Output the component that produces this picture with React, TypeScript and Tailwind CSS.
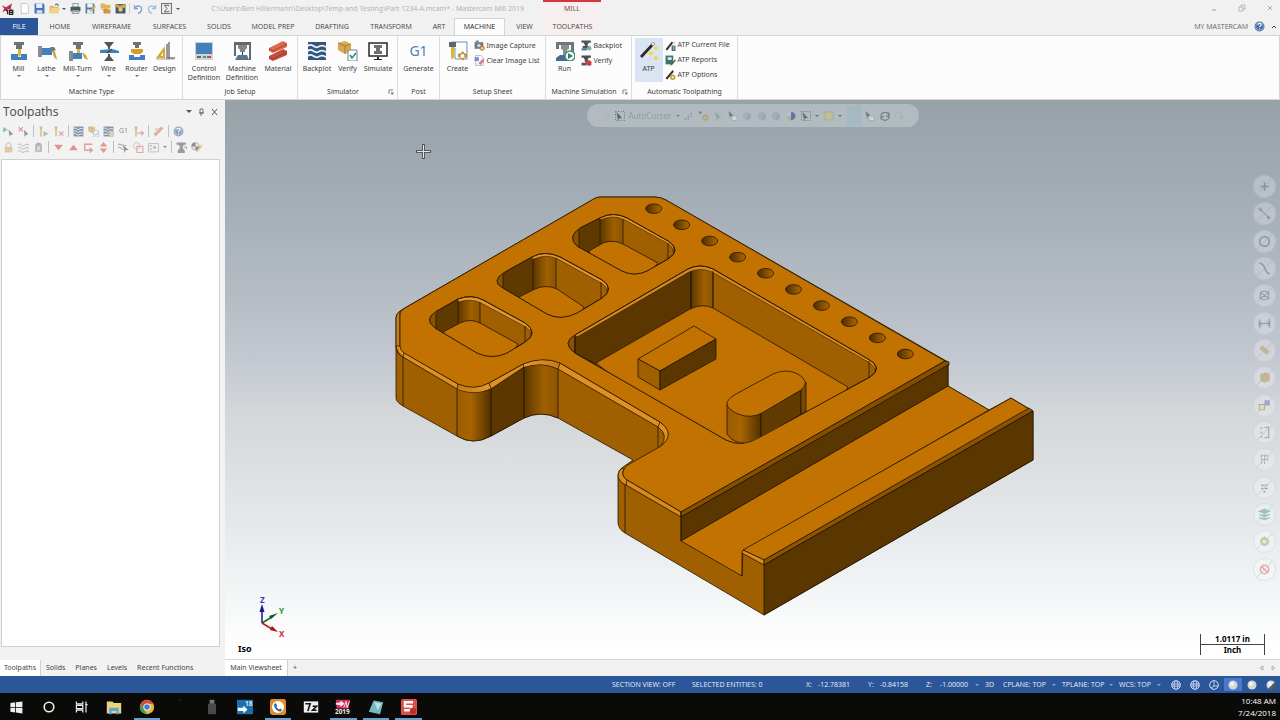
import type { ReactNode } from 'react';

const C = { steel: '#6f7377', blue: '#4180bd', navy: '#34557c', red: '#c94b43', green: '#3f9d7c' };

const glyphs: Record<string, ReactNode> = {
  mill: <><path d="M5 1h10v3h-2v4H7V4H5z" fill={C.steel} /><path d="M9 8h3v6l-2 2-1-2z" fill="#d8b830" /><path d="M2 13h7v3h3v-3h6v6H2z" fill={C.blue} /></>,
  lathe: <><path d="M1 5h4v11H1z" fill="#858b91" /><path d="M5 7h10v7H5z" fill={C.blue} /><path d="M15 6l2 2 2 6 1 5-3-3-3-9z" fill="#c8a644" /><path d="M13 6h4l2 3-4 1z" fill="#777" /></>,
  millturn: <><path d="M5 1h10v3h-2v4H8V4H5z" fill={C.steel} /><path d="M9 8h3v4H9z" fill="#d8b830" /><path d="M1 10h4v10H1z" fill="#858b91" /><path d="M5 12h9v6H5z" fill={C.blue} /><path d="M14 11l4 3 2 5-4-2z" fill="#c8a644" /></>,
  wire: <><path d="M5 1h10l-4 5v2H9V6zM5 20h10l-4-5v-2H9v2z" fill="#555" /><path d="M1 9l12-1 7 2v2H1z" fill={C.blue} /><path d="M13 8l-5 4" stroke="#222" /></>,
  router: <><path d="M6 1h8v3h-2v3H8V4H6z" fill={C.steel} /><path d="M4 8h12v3l-3 2H7l-3-2z" fill="#d79c25" /><path d="M2 14h5v2h6v-2h5v5H2z" fill={C.blue} /></>,
  design: <><path d="M1 17L10 5v12zm5-2h2v-4z" fill="#d6aa33" fillRule="evenodd" /><path d="M14 1v17M12 3v14h8" stroke="#777" strokeWidth="1.500" fill="none" /><path d="M1 18h18" stroke="#999" /></>,
  control: <><path d="M1 1h18v18H1z" fill="#cfd3d6" /><path d="M2 2h16v11H2z" fill={C.blue} /><path d="M3 15h4v2H3z" fill="#666" /><path d="M9 15h3v2H9z" fill={C.green} /><path d="M13 15h4v2h-4z" fill={C.red} /></>,
  machine: <><path d="M2 1h17v18h-2V4H4v11H2z" fill="#65696d" /><path d="M6 4h9v3l-2 2v2H8V9L6 7z" fill="#81868a" /><path d="M10 11h1v3h-1z" fill="#333" /><path d="M6 14h9l2 5H3z" fill="#55748d" /></>,
  material: <><path d="M1 7L15 0l4 2v4L5 12l-4-2z" fill="#dc694d" /><path d="M1 15l14-7 4 2v4L5 20l-4-2z" fill="#c44e3c" /><path d="M1 8l4 2 14-7M1 16l4 2 14-7" stroke="#92382d" strokeWidth=".8" fill="none" /></>,
  backplot: <><path d="M1 1h18v18H1z" fill={C.navy} /><path d="M1 5c4-4 6 3 10 1 3-2 5-2 8 0M1 10c4-4 6 3 10 1 3-2 5-2 8 0M1 15c4-4 6 3 10 1 3-2 5-2 8 0" stroke="#eef5fc" strokeWidth="1.800" fill="none" /></>,
  verify: <><path d="M0 2l7-2 6 3v7l-6 3-7-4z" fill="#d9a850" /><path d="M0 2l7 3 6-2M7 5v8" stroke="#a77a39" fill="none" /><path d="M10 9h9v11h-9z" fill="#fff" stroke="#718292" /><path d="M12 14l2 3 4-5" stroke="#268b72" strokeWidth="1.500" fill="none" /></>,
  simulate: <><path d="M1 2h18v13H1z" fill="#fff" stroke="#26292b" strokeWidth="1.500" /><path d="M6 4h8v3h-2v3h2v3H6v-3h2V7H6z" fill="#697178" /><path d="M9 16h2v2h3v1H6v-1h3z" fill="#222" /></>,
  create: <><path d="M4 1h15v17H7V7H4z" fill="#fcfcfc" stroke="#6793bd" /><path d="M1 1h7v5H1z" fill="#60666d" /><path d="M3 6h3v10l-2 3-1-3z" fill="#dcb52d" /><path d="M15 10l1 2 3 1v3l-3 1-1 3-2-3-3-1v-3l3-1z" fill="#c98d32" /><circle cx="14.500" cy="15" r="2" fill="#fff" /></>,
  run: <><path d="M1 1h18v10h-3V4H4v4H1z" fill="#72767a" /><path d="M6 4h8v4l-2 1v5H8V9L6 8z" fill="#8b8e91" /><path d="M1 17l4-3h8v6H1z" fill="#446d93" /><circle cx="15" cy="15" r="5" fill="#fff" stroke="#418d78" strokeWidth="1.500" /><path d="M13 12l5 3-5 3z" fill="#2b8068" /></>,
  wand: <><path d="M1 15L14 1l2 2L3 17z" fill="#292929" /><path d="M12 3l2-2 2 2-2 2z" fill="#eee" stroke="#777" strokeWidth=".5" /><path d="M17 4l1 2 2 1-2 1-1 2-1-2-2-1 2-1zM12 9l1 2 3 1-3 1-1 3-1-3-3-1 3-1zM17 14l1 2 2 1-2 1-1 2-1-2-2-1 2-1z" fill="#f1d54a" /></>,
  camera: <><path d="M1 4h16v12H1z" fill="#77797b" /><path d="M3 1h6v4H3z" fill="#6891bb" /><circle cx="9" cy="10" r="4" fill="#c8d8e8" stroke="#444" /><circle cx="15" cy="15" r="4" fill="#d6a642" stroke="#a97824" /><circle cx="15" cy="15" r="1.500" fill="#fff" /></>,
  clear: <><path d="M3 1h10l4 4v14H3z" fill="#f7f9fc" stroke="#7892b5" /><path d="M1 4h8v7H1z" fill="#7595bc" /><path d="M8 15L16 7l3 3-7 8z" fill="#d77a91" /></>,
  miniRun: <><path d="M1 1h17v4h-4l-2 4v2h4v4H3v-4h4V9L5 5H1z" fill="#4c555c" /><path d="M1 15h10v4H1z" fill="#4e7998" /><circle cx="15" cy="15" r="4" fill="#86aaa9" /></>,
  miniVerify: <><path d="M1 1h17v4h-4l-2 4v4H7V9L5 5H1z" fill="#474d51" /><path d="M1 14h9v5H1z" fill="#52585c" /><path d="M9 11l5-2 5 3v6l-5 2-5-3z" fill="#cb3e3c" /></>,
  atpFile: <><path d="M1 17L12 3l3 2L4 19z" fill="#2e2e2e" /><path d="M15 1l1 3 3 1-4 2z" fill="#d7b644" /><path d="M12 10h7v10h-7z" fill="#3a7385" /><path d="M15 11h1v7" stroke="#fff" fill="none" /></>,
  report: <><path d="M1 1h14v16H1z" fill="#39776e" /><path d="M5 4h7v5H5z" fill="#e0ece8" /><path d="M9 19L18 8l2 2-9 9z" fill="#4b514d" /></>,
  atpOptions: <><path d="M1 17L14 2l2 3L4 19z" fill="#2e2e2e" /><circle cx="14" cy="15" r="3.500" fill="#fff" stroke="#c0a52d" strokeWidth="3" /></>,
  doc: <path d="M4 1h9l4 4v14H4z" fill="#fff" stroke="#9aa3aa" />,
  save: <><path d="M1 1h16l2 2v16H1z" fill="#4279ba" /><path d="M4 1h11v8H4z" fill="#eaf1f8" /><path d="M5 13h10v6H5z" fill="#d4e1ed" /></>,
  folder: <><path d="M1 5h7l2 2h7v11H1z" fill="#dfba66" /><path d="M4 9h16l-4 10H1z" fill="#efd28f" /><path d="M11 4c4-4 6-1 6 2" stroke="#52718c" strokeWidth="2" fill="none" /></>,
  print: <><path d="M5 1h10v6H5zM4 13h12v6H4z" fill="#eef3f6" stroke="#555" /><path d="M1 7h18v8H1z" fill="#4d5961" /><path d="M4 13h12v4H4z" fill="#9cabae" /></>,
  saveAs: <><path d="M1 1h16v18H1z" fill="#4f7cac" /><path d="M4 1h10v7H4zM4 12h10v7H4z" fill="#eff3f6" /><path d="M8 15L18 4l2 3L10 17z" fill="#e2b33d" /></>,
  folders: <><path d="M1 1h7l2 2h9v7H1z" fill="#e0b653" /><path d="M7 10h6l2 2h4v7H7z" fill="#ce983b" /><path d="M3 12h4v6" stroke="#777" fill="none" /></>,
  package: <><path d="M1 2h18v17H1z" fill="#3d5a80" /><path d="M1 2l8 3 10-3v6L9 10 1 7z" fill="#d4aa3b" /><circle cx="10" cy="12" r="4" fill="#f2cb4c" /></>,
  undo: <path d="M3 2v7h7M4 8c5-7 15-4 13 4-1 4-4 6-7 7" stroke="#7ba3ca" strokeWidth="2.500" fill="none" />,
  redo: <path d="M17 2v7h-7M16 8C11 1 1 4 3 12c1 4 4 6 7 7" stroke="#a3bdd7" strokeWidth="2.500" fill="none" />,
  sigma: <><path d="M1 1h18v18H1z" stroke="#777" strokeWidth="2" fill="none" /><path d="M14 6V4H6l5 6-5 6h8v-2" stroke="#444" strokeWidth="1.500" fill="none" /></>,
  select: <><path d="M0 2l9 5-9 5z" fill="#49a777" /><path d="M10 7l9 8-5 1-2 4z" fill="#555" /></>,
  deselect: <><path d="M1 2l8 8M9 2l-8 8" stroke="#d85757" strokeWidth="2" /><path d="M11 7l8 8-4 1-3 4z" fill="#555" /></>,
  toolPlay: <><path d="M3 1h5v5H7v13H4V6H3z" fill="#b7a358" /><path d="M10 9l9 5-9 5z" fill="#63ab72" /></>,
  toolX: <><path d="M3 1h5v5H7v13H4V6H3z" fill="#b7a358" /><path d="M11 10l8 8M19 10l-8 8" stroke="#d56c65" strokeWidth="2" /></>,
  toolMove: <><path d="M3 1h5v5H7v13H4V6H3z" fill="#b7a358" /><path d="M8 13h11m-4-4l4 4-4 4" stroke="#d87868" strokeWidth="2" fill="none" /></>,
  regen: <><path d="M1 1h18v18H1z" fill={C.navy} /><path d="M1 5c4-4 6 3 10 1 3-2 5-2 8 0M1 10c4-4 6 3 10 1 3-2 5-2 8 0M1 15h9" stroke="#eef5fc" strokeWidth="1.800" fill="none" /><circle cx="15" cy="15" r="4" fill="#d2c07c" /></>,
  cut: <><path d="M1 14L15 1l4 3L5 19z" fill="#d87575" /><path d="M3 4h8L6 14z" fill="#dfc665" /></>,
  help: <><circle cx="10" cy="10" r="9" fill="#426c9f" /><circle cx="10" cy="10" r="7" stroke="#c4d9ec" fill="none" /><path d="M7 7c1-4 7-3 6 0 0 2-3 2-3 4m0 2v2" stroke="#fff" strokeWidth="2" fill="none" /></>,
  lock: <><path d="M3 9h14v10H3z" fill="#d6ad6b" /><path d="M6 9V5c1-5 8-5 8 0v4" stroke="#aaa" strokeWidth="2" fill="none" /></>,
  waves: <path d="M0 5c5-5 7 5 12 1 4-3 5-2 8 0M0 11c5-5 7 5 12 1 4-3 5-2 8 0M0 17c5-5 7 5 12 1 4-3 5-2 8 0" stroke="#71869a" strokeWidth="1.500" fill="none" />,
  ghost: <><path d="M4 19V7c0-8 12-8 12 0v12l-3-2-3 2-3-2z" fill="#85898d" /><path d="M7 7h6v9H7z" fill="#c5c5c5" /></>,
  down: <path d="M2 5h16l-8 10z" fill="#d65050" />,
  up: <path d="M2 15h16L10 5z" fill="#d65050" />,
  loop: <path d="M17 4H3v11h13m-4-4l5 4-5 4" stroke="#d66464" strokeWidth="2.500" fill="none" />,
  updown: <path d="M3 8h14l-7-8zM3 12h14l-7 8z" fill="#d65c55" />,
  cursorWave: <><path d="M0 5c6-5 7 5 15 1M0 11c5-5 5 4 10 2" stroke="#71869a" strokeWidth="2" fill="none" /><path d="M9 6l10 8-5 1-2 5z" fill="#555" /></>,
  overlap: <><circle cx="7" cy="7" r="6" stroke="#d78383" fill="none" strokeWidth="1.500" /><path d="M7 8h11v11H7z" stroke="#d77777" fill="none" strokeWidth="2" /></>,
  list: <><path d="M1 3h18v15H1z" stroke="#888" fill="none" strokeWidth="1.500" /><path d="M4 6h3v2H4zm0 6h3v2H4z" fill="#777" /><circle cx="12" cy="10" r="3" fill="#ad9f61" /></>,
  sim: <><path d="M1 1h17v4h-4l-2 4v2l4 5v4H3v-4l4-5V9L5 5H1z" fill="#5a646b" /><path d="M14 9h5v4" stroke="#777" strokeWidth="2" fill="none" /></>,
  probe: <><circle cx="8" cy="8" r="7" fill="#ddd" stroke="#555" /><path d="M8 1v7H1c0-4 3-7 7-7zm0 14V8h7c0 4-3 7-7 7z" fill="#444" /><path d="M9 17L19 4l1 4-8 10z" fill="#d7a44e" /></>,
  arrow: <path d="M4 1l13 12-7 1-3 6z" fill="#66727e" />,
  arrowBox: <><path d="M1 1h18v18H1z" stroke="#56616b" strokeDasharray="2 3" strokeWidth="2" fill="none" /><path d="M3 2l11 12-6 1-2 4z" fill="#45515c" /></>,
  points: <path d="M1 16h3m3-5h3m3-6h3M7 16h3m3-5h3" stroke="#72808c" strokeWidth="3" />,
  gear: <><path d="M2 0v7M0 3h6" stroke="#5a6670" strokeWidth="2" /><circle cx="13" cy="13" r="4.500" stroke="#be985e" strokeWidth="3.500" fill="none" /></>,
  cube: <><path d="M2 5l8-4 8 4v10l-8 4-8-4z" fill="#8493a7" /><path d="M10 9l8-4v10l-8 4z" fill="#697d99" /></>,
  shield: <><circle cx="10" cy="10" r="9" fill="#b5c4d4" /><path d="M10 1v18c12-2 12-16 0-18z" fill="#3c5c89" /><path d="M1 10c0 5 3 9 9 9v-9z" fill="#c1a66b" /></>,
  area: <path d="M2 2h16v16H2z" fill="#c9c183" stroke="#8b9072" strokeDasharray="2 2" strokeWidth="2" />,
  refresh: <path d="M2 10c1-10 15-10 16 0m0-7v7h-6M18 11c-1 10-15 10-16 0m0 6v-6h6" stroke="#5b6975" strokeWidth="2.500" fill="none" />,
  curve: <path d="M1 12C5-1 16 2 16 9v8l-6-6" stroke="#7b8994" strokeWidth="2" fill="none" />,
  fence: <><path d="M1 0l10 9-5 1-2 5z" fill="#53606a" /><path d="M8 10h10v9H8z" fill="#dce2e5" stroke="#7b8790" /></>,
};

function Icon({ name, className = 'h-5 w-5' }: { name: string; className?: string }) {
  return <svg viewBox="0 0 20 20" className={`shrink-0 ${className}`} aria-hidden="true">{glyphs[name]}</svg>;
}

function Caret() {
  return <svg viewBox="0 0 4 2" className="h-[2px] w-[4px] shrink-0" aria-hidden="true"><path d="M0 0h4L2 2z" fill="currentColor" /></svg>;
}

const menuTabs = [
  { label: 'HOME', w: 'w-[44px]' },
  { label: 'WIREFRAME', w: 'w-[59px]' },
  { label: 'SURFACES', w: 'w-[57px]' },
  { label: 'SOLIDS', w: 'w-[42px]' },
  { label: 'MODEL PREP', w: 'w-[66px]' },
  { label: 'DRAFTING', w: 'w-[52px]' },
  { label: 'TRANSFORM', w: 'w-[66px]' },
  { label: 'ART', w: 'w-[30px]' },
  { label: 'MACHINE', w: 'w-[51px]' },
  { label: 'VIEW', w: 'w-[39px]' },
  { label: 'TOOLPATHS', w: 'w-[57px]' },
];

function TitleBar() {
  const quick = ['doc', 'save', 'folder', 'print', 'saveAs', 'folders', 'package'];
  return (
    <header className="flex h-[18px] shrink-0 bg-[#f1f1f1]">
      <div className="flex w-[543px] shrink-0 items-center pb-[1px]">
        <svg viewBox="0 0 20 20" className="ml-[1px] mr-[5px] h-[13px] w-[13px] shrink-0" aria-hidden="true">
          <path d="M1 5l7 3 9-6-2 8 3 2-8-1-8 5 3-6z" fill="#c9284c" />
          <path d="M7 13h3v6m3-6h5v6h-5zm0 3h5" stroke="#222" strokeWidth="2" fill="none" />
        </svg>
        <div className="flex shrink-0 items-center gap-[4px] text-gray-600">
          {quick.map((q) => (
            <button key={q} aria-label={q} className="flex items-center gap-[2px]">
              <Icon name={q} className="h-[11px] w-[11px]" />
              {q === 'folder' && <Caret />}
            </button>
          ))}
        </div>
        <div className="ml-[3px] flex shrink-0 items-center gap-[4px] border-l border-gray-300 pl-[3px] text-gray-600">
          <button aria-label="undo"><Icon name="undo" className="h-[10px] w-[10px]" /></button>
          <button aria-label="redo"><Icon name="redo" className="h-[10px] w-[10px]" /></button>
          <button aria-label="analyze"><Icon name="sigma" className="h-[11px] w-[11px]" /></button>
          <button aria-label="customize"><Caret /></button>
        </div>
        <span className="ml-auto mr-[19px] whitespace-nowrap text-[#b4b4b4]">C:\Users\Ben Hillermann\Desktop\Temp and Testing\Part 1234-A.mcam* - Mastercam Mill 2019</span>
      </div>
      <div className="w-[58px] shrink-0 border-t-2 border-[#d2373c] bg-[#f7efef] pt-[2px] text-center text-[#8c4a47]">MILL</div>
      <div className="ml-auto flex w-[70px] items-center justify-between pb-[2px] pr-[6px] text-gray-400">
        <button aria-label="Minimize"><svg viewBox="0 0 8 8" className="h-2 w-2"><path d="M2 6h4" stroke="currentColor" /></svg></button>
        <button aria-label="Restore"><svg viewBox="0 0 8 8" className="h-2 w-2"><path d="M1 3h4v4H1zM3 3V1h4v4H5" stroke="currentColor" strokeWidth=".7" fill="none" /></svg></button>
        <button aria-label="Close"><svg viewBox="0 0 8 8" className="h-2 w-2"><path d="M2 2l4 4M6 2L2 6" stroke="currentColor" strokeWidth=".8" /></svg></button>
      </div>
    </header>
  );
}

function MenuTabs() {
  return (
    <nav className="flex h-[17px] shrink-0 bg-[#f1f1f1] font-['Open_Sans',sans-serif] text-[#444]">
      <button className="w-[38px] shrink-0 bg-[#2b579a] text-white">FILE</button>
      {menuTabs.map((t) => (
        <button
          key={t.label}
          className={`${t.w} shrink-0 whitespace-nowrap ${t.label === 'MACHINE' ? 'border border-b-0 border-[#d4d4d4] bg-[#fcfcfc] text-[#222]' : ''} ${t.label === 'TOOLPATHS' ? 'bg-[#f7efef]' : ''}`}
        >
          {t.label}
        </button>
      ))}
      <div className="ml-auto flex items-center gap-[6px] pr-[3px]">
        <button className="text-[#666]">MY MASTERCAM</button>
        <button aria-label="Help"><Icon name="help" className="h-[11px] w-[11px]" /></button>
        <button aria-label="Collapse ribbon"><svg viewBox="0 0 6 6" className="h-[6px] w-[6px]"><path d="M1 4l2-2 2 2" stroke="#444" fill="none" /></svg></button>
      </div>
    </nav>
  );
}

function Group({ title, w, launcher, children }: { title: string; w: string; launcher?: boolean; children: ReactNode }) {
  return (
    <section className={`${w} flex shrink-0 flex-col border-r border-[#dcdcdc]`}>
      <div className="mt-[2px] flex h-[44px] justify-center">{children}</div>
      <div className="mt-[5px] flex items-center">
        <h2 className="flex-1 whitespace-nowrap text-center">{title}</h2>
        {launcher && (
          <button aria-label={`${title} options`} className="mr-[3px]">
            <svg viewBox="0 0 6 6" className="h-[6px] w-[6px]"><path d="M1 5V1h4M3 3l2 2V3M5 5H3" stroke="#666" strokeWidth=".8" fill="none" /></svg>
          </button>
        )}
      </div>
    </section>
  );
}

function BigButton({ icon, label, w, menu, active }: { icon: string; label: string; w: string; menu?: boolean; active?: boolean }) {
  return (
    <button className={`${w} flex shrink-0 flex-col items-center pt-[3px] ${active ? 'bg-[#dbe4f3]' : ''}`}>
      {icon === 'g1' ? <span className="h-5 text-[14px] leading-5 text-[#4f83b8]">G1</span> : <Icon name={icon} />}
      <span className="mt-[3px] block whitespace-pre-line text-center leading-[9px]">{label}</span>
      {menu && <span className="mt-[2px] text-gray-500"><Caret /></span>}
    </button>
  );
}

function SmallButton({ icon, label }: { icon: string; label: string }) {
  return (
    <button className="flex h-[15px] items-center gap-[2px] whitespace-nowrap">
      <Icon name={icon} className="h-[11px] w-[11px]" />
      {label}
    </button>
  );
}

function Ribbon() {
  return (
    <div className="flex h-[65px] shrink-0 border border-[#d4d4d4] bg-[#fcfcfc] text-[#3c3c3c]">
      <Group title="Machine Type" w="w-[182px]">
        <BigButton icon="mill" label="Mill" w="w-[28px]" menu />
        <BigButton icon="lathe" label="Lathe" w="w-[28px]" menu />
        <BigButton icon="millturn" label="Mill-Turn" w="w-[34px]" menu />
        <BigButton icon="wire" label="Wire" w="w-[28px]" menu />
        <BigButton icon="router" label="Router" w="w-[28px]" menu />
        <BigButton icon="design" label="Design" w="w-[28px]" />
      </Group>
      <Group title="Job Setup" w="w-[115px]">
        <BigButton icon="control" label={'Control\nDefinition'} w="w-[38px]" />
        <BigButton icon="machine" label={'Machine\nDefinition'} w="w-[38px]" />
        <BigButton icon="material" label="Material" w="w-[34px]" />
      </Group>
      <Group title="Simulator" w="w-[100px]" launcher>
        <BigButton icon="backplot" label="Backplot" w="w-[32px]" />
        <BigButton icon="verify" label="Verify" w="w-[29px]" />
        <BigButton icon="simulate" label="Simulate" w="w-[32px]" />
      </Group>
      <Group title="Post" w="w-[42px]">
        <BigButton icon="g1" label="Generate" w="w-[38px]" />
      </Group>
      <Group title="Setup Sheet" w="w-[106px]">
        <BigButton icon="create" label="Create" w="w-[32px]" />
        <div className="flex w-[70px] flex-col items-start">
          <SmallButton icon="camera" label="Image Capture" />
          <SmallButton icon="clear" label="Clear Image List" />
        </div>
      </Group>
      <Group title="Machine Simulation" w="w-[86px]" launcher>
        <BigButton icon="run" label="Run" w="w-[32px]" />
        <div className="flex w-[48px] flex-col items-start">
          <SmallButton icon="miniRun" label="Backplot" />
          <SmallButton icon="miniVerify" label="Verify" />
        </div>
      </Group>
      <Group title="Automatic Toolpathing" w="w-[106px]">
        <BigButton icon="wand" label="ATP" w="w-[28px]" active />
        <div className="ml-[2px] flex w-[70px] flex-col items-start">
          <SmallButton icon="atpFile" label="ATP Current File" />
          <SmallButton icon="report" label="ATP Reports" />
          <SmallButton icon="atpOptions" label="ATP Options" />
        </div>
      </Group>
    </div>
  );
}

const toolRows = [
  ['select', 'deselect', '|', 'toolPlay', 'toolX', '|', 'backplot', 'verify', 'regen', 'g1', 'toolMove', '|', 'cut', '|', 'help'],
  ['lock', 'waves', 'ghost', '|', 'down', 'up', 'loop', 'updown', '|', 'cursorWave', 'overlap', 'list', 'caret', '|', 'sim', 'probe'],
];

function ToolpathsPanel() {
  const tabs = ['Solids', 'Planes', 'Levels', 'Recent Functions'];
  return (
    <aside className="flex w-[225px] shrink-0 flex-col bg-[#f2f2f2] text-[#444]">
      <div className="flex h-[23px] items-center pl-[3px] pr-[7px]">
        <h1 className="font-['Open_Sans',sans-serif] text-[12px] leading-[16px]">Toolpaths</h1>
        <div className="ml-auto flex items-center gap-[5px] text-[#555]">
          <button aria-label="Panel menu"><svg viewBox="0 0 6 3" className="h-[3px] w-[6px]"><path d="M0 0h6L3 3z" fill="currentColor" /></svg></button>
          <button aria-label="Pin"><svg viewBox="0 0 8 8" className="h-2 w-2"><path d="M3 1h3v4H3zM2 5h5M4 5v3" stroke="currentColor" strokeWidth=".8" fill="none" /></svg></button>
          <button aria-label="Close panel"><svg viewBox="0 0 8 8" className="h-2 w-2"><path d="M2 1l5 6M7 1L2 7" stroke="currentColor" /></svg></button>
        </div>
      </div>
      <div className="flex flex-col pl-[3px]">
        {toolRows.map((row, i) => (
          <div key={i} className="flex h-4 items-center gap-[4px] opacity-60">
            {row.map((n, j) => {
              if (n === '|') return <span key={j} className="h-3 w-px bg-gray-400" />;
              if (n === 'caret') return <Caret key={j} />;
              return (
                <button key={j} aria-label={n} className="flex w-[11px] justify-center">
                  {n === 'g1' ? 'G1' : <Icon name={n} className="h-[11px] w-[11px]" />}
                </button>
              );
            })}
          </div>
        ))}
      </div>
      <div className="ml-[1px] mr-[5px] mt-[4px] flex-1 border border-[#cfcfcf] bg-white" />
      <div className="mt-[13px] flex h-[16px] items-center">
        <button className="h-full w-[41px] border-r border-[#d0d0d0] bg-white">Toolpaths</button>
        {tabs.map((t) => <button key={t} className="px-[5px]">{t}</button>)}
      </div>
    </aside>
  );
}

const line = '#251600';
const top = '#c27200';
const left = '#a05f00';
const dark = '#5a3600';

const pockets = [
  {
    rim: 'M580 228L600 218Q613 211 627 218L668 241Q682 250 668 259L647 271Q634 277 622 271L577 246Q567 237 580 228Z',
    light: 'M600 218Q613 211 627 218L668 241Q676 246 673 252Q673 246 667 243L625 220Q613 214 600 220Z',
    floor: 'M589 251L603 243Q613 239 623 244L658 263L640 285H600Z',
    x: [579, 600, 623, 668], y: 214,
    edges: 'M579 230V247M600 219V244M623 219V244M668 243V259',
  },
  {
    rim: 'M505 272L532 257Q545 250 560 257L602 280Q615 289 602 298L577 313Q561 321 547 314L503 288Q490 281 505 272Z',
    light: 'M532 257Q545 250 560 257L602 280Q610 285 607 291Q607 286 601 283L558 259Q545 253 532 260Z',
    floor: 'M519 297L535 289Q546 284 557 289L584 307L580 325H530Z',
    x: [503, 533, 556, 601], y: 253,
    edges: 'M503 275V288M533 258V290M556 258V289M601 282V298',
  },
  {
    rim: 'M437 311L458 299Q472 294 483 300L525 323Q539 333 525 342L507 353Q492 360 477 353L435 328Q423 319 437 311Z',
    light: 'M458 299Q472 294 483 300L525 323Q533 328 531 334Q531 330 524 326L481 303Q471 298 458 302Z',
    floor: 'M443 332L460 323Q470 318 480 323L518 344L505 365H465Z',
    x: [436, 458, 480, 525], y: 297,
    edges: 'M436 314V328M458 301V323M480 302V323M525 326V342',
  },
];

const bigRim = 'M575 335L688 269Q700 263 713 269L868 359Q884 368 870 377L760 437Q742 448 726 440L575 353Q561 343 575 335Z';

function PartDrawing() {
  const holes = Array.from({ length: 10 }, (_, i) => ({ x: 653.7 + i * 27.96, y: 208.7 + i * 16.15 }));
  return (
    <svg viewBox="225 100 1055 559" className="h-full w-full" role="img" aria-label="Machined part, isometric view">
      <defs>
        <linearGradient id="corner"><stop offset="0" stopColor="#5a3600" /><stop offset=".6" stopColor="#a06000" /><stop offset="1" stopColor="#8c5300" /></linearGradient>
        <linearGradient id="convex"><stop offset="0" stopColor="#9a5b00" /><stop offset=".4" stopColor="#a86400" /><stop offset="1" stopColor="#523100" /></linearGradient>
        <linearGradient id="hole"><stop offset="0" stopColor="#4b2c00" /><stop offset="1" stopColor="#b06800" /></linearGradient>
        <linearGradient id="rimLight"><stop offset="0" stopColor="#c47a10" /><stop offset=".5" stopColor="#f3a93f" /><stop offset="1" stopColor="#c47a10" /></linearGradient>
        {pockets.map((p, i) => <clipPath key={i} id={`pocket${i}`}><path d={p.rim} /></clipPath>)}
        <clipPath id="bigPocket"><path d={bigRim} /></clipPath>
      </defs>
      <g stroke={line} strokeWidth=".8" strokeLinejoin="round" fill="none">
        <path fill={left} d="M600 197H655Q660 197 666 200L948 362V386L989 410L1011 398L1033 411V460L764 615L625 533Q618 529 618 522V475Q618 470 623 467L633 460L558 418Q541 410 524 418L491 436Q473 446 457 436L403 406Q396 402 396 398V318Q396 313 403 309L592 200Q596 197 600 197Z" />
        <path fill="#5c3700" d="M491 388L524 367V418L491 436Z" />
        <path fill="url(#convex)" d="M457 389Q474 396 491 388V436Q473 446 457 436Z" />
        <path fill="url(#corner)" d="M524 367Q541 361 558 368V418Q541 410 524 418Z" />
        <path d="M403 357V406M658 426V447" />
        <path fill="#c87d18" d="M396 318Q396 313 400 311V349L403 357Q396 354 396 346Z" />
        <path fill="#e08f22" d="M400 346L405 353L458 384Q474 391 489 383L523 364Q543 356 560 363L660 422Q674 431 667 441L661 446Q669 435 658 427L558 369Q541 361 524 367L491 389Q474 396 457 389L403 357Q397 353 396 346Z" />
        <path stroke="none" fill="url(#rimLight)" d="M458 384Q474 391 489 383L491 388Q474 396 457 389ZM523 364Q543 356 560 363L558 368Q541 361 524 367Z" />
        <path fill={top} d="M600 197H655Q660 197 666 200L945 361L681 512L627 480Q620 475 624 469Q626 465 633 462L661 446Q676 434 660 422L560 363Q543 356 523 364L489 383Q474 391 458 384L404 353Q400 350 400 346V313Q401 310 405 308L592 200Q596 197 600 197Z" />
        <path d="M458 384L457 389M489 383L491 389M523 364L524 367M560 363L558 369M404 353L403 357M660 422L658 427" />

        {/* rounded corner beside the channel */}
        <path fill="#d98a1c" d="M622 468Q618 471 618 476Q619 482 626 485L681 517V512L627 480Q620 475 624 469Z" />
        <path d="M625 485V533M627 480L626 485" />

        <path fill="#845000" d="M681 512L945 361L949 362V365L681 517Z" />
        <path fill={dark} d="M681 517L948 365V386L681 541Z" />
        <path fill={top} d="M681 541L948 386L989 410L743 551L742 576Z" />
        <path fill={top} d="M743 550L1011 398L1029 409L764 560Z" />
        <path fill="#df8d22" d="M743 550L764 560V565L742 553Z" />
        <path fill="#8c5400" d="M764 560L1029 408L1033 411L764 565Z" />
        <path fill={dark} d="M764 565L1033 411V460L764 615Z" />
        <path d="M681 512V541M742 553V576" />

        {pockets.map((p, i) => (
          <g key={i}>
            <path d={p.rim} fill={left} />
            <g clipPath={`url(#pocket${i})`}>
              <rect x={p.x[0] - 10} y={p.y} width="10" height="50" fill="#8a5200" stroke="none" />
              <rect x={p.x[0]} y={p.y} width={p.x[1] - p.x[0]} height="50" fill="#5e3900" stroke="none" />
              <rect x={p.x[1]} y={p.y} width={p.x[2] - p.x[1]} height="50" fill="url(#corner)" stroke="none" />
              <path d={p.floor} fill={top} />
            </g>
            <path d={p.light} fill="#e3982f" strokeWidth=".5" />
            <path d={p.edges} />
            <path d={p.rim} />
          </g>
        ))}

        <path d={bigRim} fill={left} />
        <g clipPath="url(#bigPocket)">
          <path d="M560 350V330L575 335V356Z" fill="#8a5200" />
          <path d="M575 337L691 270V310L596 364L575 353Z" fill={dark} />
          <path d="M691 268Q702 264 713 270V310H691Z" fill="url(#corner)" />
          <path d="M596 363L690 309Q702 303 713 308L848 387L800 460H720Z" fill={top} />
        </g>
        <path d="M575 335L688 269Q700 263 713 269L868 359Q878 364 875 371Q875 366 868 362L712 272Q700 267 689 272L577 337Z" fill="#d78a22" strokeWidth=".5" />
        <path d="M575 338V353M691 271V309M713 271V308M869 361V377" />
        <path d={bigRim} />

        <path fill={top} d="M694 326L716 339L660 371L638 359Z" />
        <path fill={left} d="M638 359L660 371V390L638 377Z" />
        <path fill={dark} d="M660 371L716 339V359L660 390Z" />

        <g clipPath="url(#bigPocket)">
          <path fill="url(#convex)" d="M727 404V434Q734 444 745 443Q754 442 761 438V413Z" />
          <path fill="#623b00" d="M761 413L801 390V414L761 438Z" />
          <path fill="#7a4900" d="M801 390L806 382V411L801 414Z" />
        </g>
        <path fill={top} d="M727 404Q727 399 736 394L773 374Q786 368 798 374Q811 382 801 390L762 413Q751 419 738 414Q727 409 727 404Z" />

        {holes.map((h, i) => <ellipse key={i} cx={h.x} cy={h.y} rx="8" ry="4.800" fill="url(#hole)" />)}
      </g>
      <path d="M416 151.500h15M423.500 144v15" stroke="#444" strokeWidth="2.500" />
      <path d="M417 151.500h13M423.500 145v13" stroke="#e4e6e8" />
    </svg>
  );
}

const selectionTools = ['points', 'gear', 'arrow', 'fence', 'cube', 'cube', 'cube', 'shield', 'arrowBox', 'caret', 'area', 'caret', 'active', 'fence', 'refresh', 'curve'];
const dimmed = ['arrow', 'cube', 'curve'];

const maskShapes: ReactNode[] = [
  <path d="M10 6v8M6 10h8" stroke="#5f7196" strokeWidth="1.500" />,
  <path d="M6 6l8 8M4 6h4M6 4v4M12 14h4M14 12v4" stroke="#6f7790" />,
  <circle cx="10" cy="10" r="4.500" stroke="#687594" strokeWidth="1.500" fill="none" />,
  <path d="M5 5c7 0 4 10 10 10" stroke="#687594" strokeWidth="1.500" fill="none" />,
  <path d="M6 7q4-2 8 0v6q-4 2-8 0zM6 7l8 6M14 7l-8 6" stroke="#687594" fill="none" />,
  <path d="M5 6v8M15 6v8M5 10h10M7 8l-2 2 2 2M13 8l2 2-2 2" stroke="#687594" fill="none" />,
  <path d="M5 8l3-3 7 6-3 3z" fill="#b4a66b" />,
  <path d="M6 7l5-2 4 2v6l-5 2-4-2z" fill="#b69e67" />,
  <><path d="M10 5h5v5h-5z" fill="#7d80b4" /><path d="M5 9h5v5H5z" fill="#e0d6ae" stroke="#a08c58" /></>,
  <><path d="M6 5h2v2H6zM6 9h2v2H6zM6 13h2v2H6z" fill="#a3a46e" /><path d="M10 5h4v10h-4" stroke="#777" fill="none" /></>,
  <path d="M7 6v9M10 6v9M13 6v6M7 6h6M7 10h5" stroke="#777f86" strokeDasharray="2 1" fill="none" />,
  <path d="M7 8h2m1 0h1m1 0h1M7 11h2m1 0h3M9 14h2" stroke="#8a6673" strokeWidth="1.500" />,
  <path d="M10 5l5 2-5 2-5-2zM5 10l5 2 5-2M5 13l5 2 5-2" fill="#6da0ac" stroke="#6da0ac" />,
  <><circle cx="10" cy="10" r="3" stroke="#b9b06d" strokeWidth="2.500" fill="none" /><path d="M10 5v2M15 10h-2" stroke="#b9b06d" /></>,
  <><circle cx="10" cy="10" r="4" stroke="#d77d7d" strokeWidth="1.500" fill="none" /><path d="M7 7l6 6" stroke="#d77d7d" strokeWidth="1.500" /></>,
];

function Viewport() {
  return (
    <main className="flex min-w-0 flex-1 flex-col">
      <div className="relative min-h-0 flex-1 overflow-hidden bg-[linear-gradient(to_bottom,#96a2a8_0%,#a2acb5_16%,#b3bac2_33%,#c3c8d0_46%,#d3d7da_56%,#e3e7ea_74%,#f5f7f8_90%,#ffffff_98%)]">
        <PartDrawing />
        <div className="absolute left-1/2 top-[4px] flex h-[23px] w-[332px] -translate-x-1/2 items-center justify-between rounded-full bg-white/25 px-[14px] text-[#66727d]">
          <span className="flex items-center gap-[4px] opacity-80">
            <Icon name="lock" className="h-[10px] w-[10px] opacity-50 grayscale" />
            <Icon name="arrowBox" className="h-[10px] w-[10px]" />
            <button className="text-[8px] text-[#87939d]">AutoCursor</button>
            <Caret />
          </span>
          {selectionTools.map((n, i) => {
            if (n === 'caret') return <Caret key={i} />;
            if (n === 'active') return <button key={i} aria-label="Toggle selection" className="h-[21px] w-[14px] bg-[#93b4c4]/40" />;
            return (
              <button key={i} aria-label={n} className={dimmed.includes(n) ? 'opacity-30' : 'opacity-70'}>
                <Icon name={n} className="h-[10px] w-[10px]" />
              </button>
            );
          })}
        </div>
        <div className="absolute right-[4px] top-[75px] flex h-[406px] flex-col justify-between">
          {maskShapes.map((s, i) => (
            <button key={i} aria-label={`Quick mask ${i + 1}`} className="h-[23px] w-[23px] rounded-full border border-[#9aa3ad]/20 bg-white/25">
              <svg viewBox="0 0 20 20" className="h-full w-full opacity-60"><path d="M17 3L3 17" stroke="#8b95a2" strokeWidth=".5" />{s}</svg>
            </button>
          ))}
        </div>
        <div className="absolute bottom-[4px] left-[13px] text-[9px] font-bold leading-[12px] text-black">
          <svg viewBox="0 0 40 46" className="mb-[2px] ml-[14px] h-[46px] w-[40px]" aria-label="Axes">
            <g strokeWidth="1.500" fontSize="8" fontWeight="bold">
              <path d="M10 28V14" stroke="#17178a" /><path d="M7.500 17L10 9l2.500 8z" fill="#17178a" /><text x="8" y="8" fill="#3333cc">Z</text>
              <path d="M10 28l10-6" stroke="#176c22" /><path d="M17 21l9-3-7 6z" fill="#0f5a1c" /><text x="27" y="19" fill="#159a2b">Y</text>
              <path d="M10 28l10 6" stroke="#b01822" /><path d="M18 35l8 2-6-6z" fill="#a3131c" /><text x="27" y="42" fill="#d62330">X</text>
            </g>
          </svg>
          Iso
        </div>
        <div className="absolute bottom-[4px] right-[15px] flex w-[65px] flex-col border-x border-[#444] text-center text-[8px] font-bold leading-[10px] text-black">
          <span className="border-b border-[#444]">1.0117 in</span>
          <span>Inch</span>
        </div>
      </div>
      <div className="flex h-[17px] items-stretch border-t border-[#d6d6d6] bg-[#f1f1f1] text-[#444]">
        <button className="w-[63px] border-r border-[#d0d0d0] bg-white">Main Viewsheet</button>
        <button aria-label="New viewsheet" className="px-[5px]">+</button>
        <div className="ml-auto flex items-center gap-[7px] pr-[4px]">
          <button aria-label="Previous"><svg viewBox="0 0 5 6" className="h-[6px] w-[5px]"><path d="M4 1v4L1 3z" stroke="#888" strokeWidth=".6" fill="none" /></svg></button>
          <button aria-label="Next"><svg viewBox="0 0 5 6" className="h-[6px] w-[5px]"><path d="M1 1v4l3-2z" stroke="#888" strokeWidth=".6" fill="none" /></svg></button>
        </div>
      </div>
    </main>
  );
}

const statusItems = [
  { text: 'SECTION VIEW: OFF', w: 'w-[80px]' },
  { text: 'SELECTED ENTITIES: 0', w: 'w-[114px]' },
  { text: 'X:', w: 'w-[12px]' },
  { text: '-12.78381', w: 'w-[50px]' },
  { text: 'Y:', w: 'w-[12px]' },
  { text: '-0.84158', w: 'w-[46px]' },
  { text: 'Z:', w: 'w-[14px]' },
  { text: '-1.00000', w: 'w-[45px]', menu: true },
  { text: '3D', w: 'w-[18px]' },
  { text: 'CPLANE: TOP', w: 'w-[59px]', menu: true },
  { text: 'TPLANE: TOP', w: 'w-[57px]', menu: true },
  { text: 'WCS: TOP', w: 'w-[48px]', menu: true },
];

function StatusBar() {
  return (
    <div className="flex h-[17px] shrink-0 items-center justify-end bg-[#2b579a] font-['Open_Sans',sans-serif] text-[#e8eef8]">
      {statusItems.map((s) => (
        <div key={s.text} className={`${s.w} flex shrink-0 items-center justify-between whitespace-nowrap pr-[6px]`}>
          <span>{s.text}</span>
          {s.menu && <span className="opacity-50"><Caret /></span>}
        </div>
      ))}
      <div className="grid h-[13px] w-[113px] shrink-0 grid-cols-6">
        {[0, 1, 2, 3, 4, 5].map((i) => (
          <button key={i} aria-label={`Shading ${i + 1}`} className={`flex items-center justify-center ${i === 3 ? 'bg-[#4779cf]' : ''}`}>
            <svg viewBox="0 0 10 10" className="h-[10px] w-[10px]">
              {i < 3
                ? <><circle cx="5" cy="5" r="4.300" stroke="#d5e4f7" fill="none" /><path d={i === 2 ? 'M5 1v5h4M5 6l-3 2' : 'M1 4h8M1 6h8M4 1q-2 4 0 8M6 1q2 4 0 8'} stroke="#d5e4f7" strokeWidth=".8" fill="none" /></>
                : <><circle cx="5" cy="5" r="4.500" fill="#d6d6d3" /><circle cx="4" cy="4" r="2" fill="#f5f5f2" />{i === 5 && <path d="M9 2A4.500 4.500 0 012 9z" fill="#4a5868" />}</>}
            </svg>
          </button>
        ))}
      </div>
    </div>
  );
}

const apps: { name: string; open?: boolean; art: ReactNode }[] = [
  { name: 'Start', art: <path d="M3 5l6-1v6H3zM10 4l8-1v7h-8zM3 11h6v6l-6-1zM10 11h8v7l-8-1z" fill="#eee" /> },
  { name: 'Search', art: <circle cx="10" cy="10" r="6" stroke="#eee" strokeWidth="2" fill="none" /> },
  { name: 'Task View', art: <path d="M3 3v3h8V3M3 17v-3h8v3M3 8h8v4H3zM15 3v14M14 7h3" stroke="#eee" strokeWidth="1.500" fill="none" /> },
  { name: 'File Explorer', art: <><path d="M1 3h7l2 2h9v13H1z" fill="#ecd27c" /><path d="M4 11h12v8h-3v-4H7v4H4z" fill="#5ba8d8" /></> },
  { name: 'Chrome', open: true, art: <><circle cx="10" cy="10" r="9" fill="#e5b83a" /><path d="M2 6a9 9 0 0116 0H10l-4 6z" fill="#d6493d" /><path d="M2 6l5 8 3 5A9 9 0 012 6z" fill="#3d9b5c" /><circle cx="10" cy="10" r="4.500" fill="#fff" /><circle cx="10" cy="10" r="3.500" fill="#3f7ed6" /></> },
  { name: 'Device', art: <path d="M9 1h3" stroke="#444" /> },
  { name: 'USB', art: <><path d="M7 1h6v5H7z" fill="#777" /><path d="M5 6h10v13H5z" fill="#4a4a4a" /></> },
  { name: 'Launcher 18', art: <><path d="M0 1h20v18H0z" fill="#1d70ae" /><path d="M1 11h7V8l5 5-5 5v-3H1z" fill="#fff" /><text x="10" y="9" fontSize="8" fontWeight="bold" fill="#d8eafa">18</text></> },
  { name: 'Phone', open: true, art: <><rect width="20" height="20" rx="3" fill="#e58a2a" /><circle cx="10" cy="10" r="7.500" fill="#fff" /><path d="M7 5l2 3-1 2 3 3 2-1 2 2-2 2C8 15 5 11 5 7z" fill="#2d6d9c" /></> },
  { name: '7-Zip', art: <><path d="M1 3h18v14H1z" fill="#eee" /><path d="M3 6h6L6 15M12 9h5l-5 5h5" stroke="#111" strokeWidth="2" fill="none" /></> },
  { name: 'Mastercam 2019', open: true, art: <><path d="M1 1h18l-2 11H2z" fill="#d52c5b" /><path d="M1 5l6-1V2l5 4-5 4V8L1 7z" fill="#eee" /><path d="M11 11l3-8 1 8 3-8" stroke="#fff" fill="none" /><text x="0" y="19" fontSize="8" fontWeight="bold" fill="#eee">2019</text></> },
  { name: 'Notepad', open: true, art: <><path d="M7 2l12 2-4 15L1 16z" fill="#75b8c5" /><path d="M8 4l9 2-5 8z" fill="#b6e2e5" /></> },
  { name: 'Snagit', open: true, art: <><rect width="20" height="20" rx="2" fill="#dd5147" /><path d="M15 4H5v5h8v5H4" stroke="#fff" strokeWidth="3" fill="none" /><circle cx="15" cy="15" r="4" fill="#b92f32" /></> },
];

function Taskbar() {
  return (
    <footer className="flex h-[27px] shrink-0 bg-[#0a0a08] font-['Open_Sans',sans-serif] text-white">
      <div className="grid w-[425px] grid-cols-[repeat(13,minmax(0,1fr))]">
        {apps.map((a) => (
          <button key={a.name} aria-label={a.name} className="mx-[3px] flex flex-col items-center justify-between">
            <svg viewBox="0 0 20 20" className="mt-[6px] h-4 w-4">{a.art}</svg>
            <span className={`h-[2px] w-full ${a.open ? 'bg-[#6aa0d0]' : ''}`} />
          </button>
        ))}
      </div>
      <div className="ml-auto flex flex-col justify-center pr-[4px] text-right text-[8px] leading-[12px]">
        <span>10:48 AM</span>
        <span>7/24/2018</span>
      </div>
    </footer>
  );
}

export default function App() {
  return (
    <div className="flex h-screen flex-col overflow-hidden bg-[#f1f1f1] font-['Noto_Sans',sans-serif] text-[7px] leading-[10px]">
      <TitleBar />
      <MenuTabs />
      <Ribbon />
      <div className="flex min-h-0 flex-1">
        <ToolpathsPanel />
        <Viewport />
      </div>
      <StatusBar />
      <Taskbar />
    </div>
  );
}
